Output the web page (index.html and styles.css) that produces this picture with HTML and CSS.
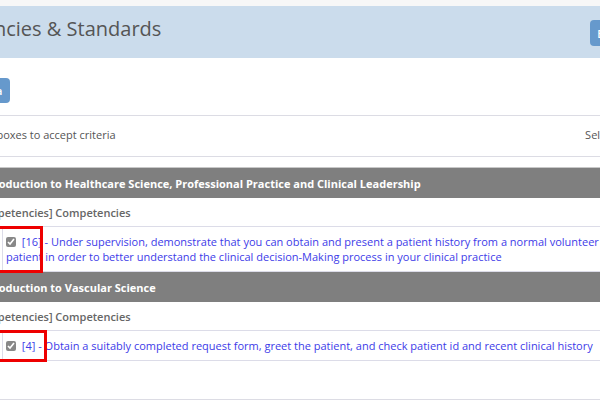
FILE: index.html
```html
<!DOCTYPE html>
<html>
<head>
<meta charset="utf-8">
<link rel="stylesheet" href="styles.css">
</head>
<body>
<div class="page">
  <div class="topstrip"></div>
  <header class="header">
    <h1 class="title">Competencies &amp; Standards</h1>
    <button class="btn btn-head">Back</button>
  </header>
  <div class="toolbar">
    <button class="btn btn-accept">Accept Criteria</button>
  </div>
  <div class="info">
    <span class="info-text">Tick the boxes to accept criteria</span>
    <span class="info-right">Select all</span>
  </div>
  <div class="table">
    <div class="bar">Introduction to Healthcare Science, Professional Practice and Clinical Leadership</div>
    <div class="sub">[Competencies] Competencies</div>
    <div class="row">
      <div class="lead"></div>
      <div class="cell">
        <input type="checkbox" class="chk" checked>
        <a class="crit" href="#">[16] - Under supervision, demonstrate that you can obtain and present a patient history from a normal volunteer patient in order to better understand the clinical decision-Making process in your clinical practice</a>
      </div>
      <div class="mark mark-1"></div>
    </div>
    <div class="bar">Introduction to Vascular Science</div>
    <div class="sub">[Competencies] Competencies</div>
    <div class="row">
      <div class="lead"></div>
      <div class="cell">
        <input type="checkbox" class="chk" checked>
        <a class="crit" href="#">[4] - Obtain a suitably completed request form, greet the patient, and check patient id and recent clinical history</a>
      </div>
      <div class="mark mark-2"></div>
    </div>
  </div>
  <div class="footer-line"></div>
</div>
</body>
</html>
```

FILE: styles.css
```css
html, body {
  margin: 0;
  padding: 0;
  background: #ffffff;
  overflow: hidden;
}
body {
  font-family: "Open Sans", "Liberation Sans", sans-serif;
  color: #555555;
  width: 600px;
  height: 400px;
}
.page {
  margin-left: -106px;
  width: 746px;
}
.topstrip {
  height: 6px;
  background: #f7f7f7;
}
.header {
  height: 52px;
  background: #cbdcec;
  display: flex;
  align-items: center;
  justify-content: space-between;
  padding: 0 0 0 15px;
}
.title {
  margin: 0 0 7px 0;
  font-size: 20px;
  font-weight: 400;
  color: #555555;
}
.btn {
  font-family: "Open Sans", "Liberation Sans", sans-serif;
  border: none;
  border-radius: 4px;
  background: #6699cc;
  color: #ffffff;
  font-size: 11px;
  font-weight: 600;
}
.btn-head {
  height: 26px;
  width: 40px;
  margin-right: 10px;
  margin-top: 2px;
}
.toolbar {
  height: 57px;
  display: flex;
  align-items: center;
  padding-left: 22px;
  border-bottom: 1px solid #dcdce4;
}
.btn-accept {
  height: 25px;
  padding: 0 8px;
  margin-top: 8px;
}
.info {
  height: 41px;
  display: flex;
  align-items: center;
  justify-content: space-between;
  padding-left: 60px;
  padding-right: 10px;
  padding-bottom: 3px;
  box-sizing: border-box;
  font-size: 11px;
  border-bottom: 1px solid #dcdce4;
}
.table {
  margin-top: 10px;
  border-top: 1px solid #c8c8c8;
}
.bar {
  height: 30px;
  background: #7f7f7f;
  color: #ffffff;
  font-weight: 700;
  font-size: 11px;
  display: flex;
  align-items: center;
  padding-left: 84px;
}
.sub {
  height: 28px;
  display: flex;
  align-items: center;
  padding-left: 76px;
  font-size: 11px;
  font-weight: 600;
  color: #666666;
  border-bottom: 1px solid #dcdce8;
}
.row {
  position: relative;
  display: flex;
  border-bottom: 1px solid #dcdce8;
}
.lead {
  width: 108px;
  flex: none;
  border-right: 1px solid #dcdce8;
}
.cell {
  flex: 1;
  padding: 7px 10px 7px 3px;
  font-size: 11px;
  line-height: 15px;
  position: relative;
}
.chk {
  width: 10px;
  height: 10px;
  margin: 3px 3px 0 0;
  vertical-align: top;
  accent-color: #888888;
}
.crit {
  color: #3d3be8;
  text-decoration: none;
}
.mark {
  position: absolute;
  border: 3px solid #ee0000;
  top: -1px;
  left: 80px;
  box-sizing: border-box;
}
.mark-1 {
  width: 69px;
  height: 47px;
}
.mark-2 {
  width: 73px;
  height: 32px;
}
.footer-line {
  margin-top: 38px;
  border-top: 1px solid #dcdce4;
}
```
